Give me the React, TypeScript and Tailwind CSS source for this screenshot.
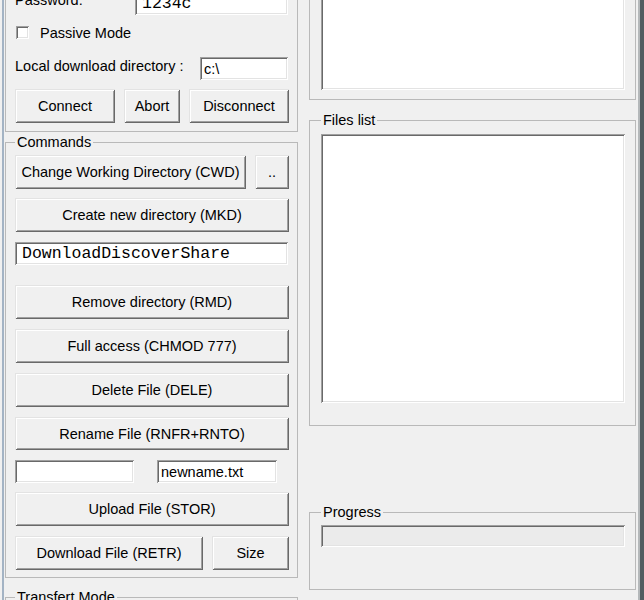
const raised =
  "shadow-[inset_1px_1px_#e3e3e3,inset_-1px_-1px_#696969,inset_2px_2px_#ffffff,inset_-2px_-2px_#a0a0a0]";
const sunken =
  "shadow-[inset_1px_1px_#a0a0a0,inset_-1px_-1px_#ffffff,inset_2px_2px_#696969,inset_-2px_-2px_#e3e3e3]";

function Btn({ label, className = "" }: { label: string; className?: string }) {
  return (
    <button className={`flex items-center justify-center bg-[#f0f0f0] text-black ${raised} ${className}`}>
      {label}
    </button>
  );
}

function TextBox({ value = "", mono = false, className = "" }: { value?: string; mono?: boolean; className?: string }) {
  return (
    <div
      className={`flex h-[23px] items-center overflow-hidden bg-white ${sunken} ${
        mono ? "pl-[7px] font-['Liberation_Mono',monospace] text-[16.5px]" : "pl-[4px]"
      } ${className}`}
    >
      {value}
    </div>
  );
}

function Group({ title, className = "", children }: { title: string; className?: string; children?: React.ReactNode }) {
  return (
    <fieldset className={`flex flex-col border border-[#b9b9b9] ${className}`}>
      <legend className="px-[2px] leading-[16px]">{title}</legend>
      {children}
    </fieldset>
  );
}

export default function App() {
  return (
    <div className="flex h-[600px] w-[644px] items-start overflow-hidden bg-[#f0f0f0] font-['Liberation_Sans',Arial,sans-serif] text-[14.5px] leading-[16px] text-black">
      {/* window edge */}
      <div className="flex h-full w-[5px] shrink-0">
        <div className="ml-[2px] h-full w-[2px] bg-[#a3b3c4]" />
      </div>

      {/* left column */}
      <div className="flex w-[293px] shrink-0 flex-col">
        <div className="-mt-[30px] flex h-[162px] flex-col border border-[#b9b9b9] pl-[9px] pr-[8px] pt-[21px]">
          <div className="flex h-[23px] items-start">
            <span>Password:</span>
            <TextBox value="1234c" mono className="ml-auto mr-[1px] w-[153px]" />
          </div>
          <div className="mt-[11px] flex h-[13px] items-center">
            <div className={`ml-[1px] h-[13px] w-[13px] bg-white ${sunken}`} />
            <span className="ml-[11px]">Passive Mode</span>
          </div>
          <div className="mt-[18px] flex h-[23px] items-start">
            <span className="mt-[1px]">Local download directory :</span>
            <TextBox value="c:\" className="ml-auto mr-[1px] w-[88px]" />
          </div>
          <div className="mt-[9px] flex h-[34px] gap-[9px]">
            <Btn label="Connect" className="w-[100px]" />
            <Btn label="Abort" className="w-[56px]" />
            <Btn label="Disconnect" className="w-[100px]" />
          </div>
        </div>

        <Group title="Commands" className="mt-[2px] h-[444px] pl-[9px] pr-[8px]">
          <div className="mt-[5px] flex h-[34px] gap-[9px]">
            <Btn label="Change Working Directory (CWD)" className="w-[231px]" />
            <Btn label=".." className="w-[34px]" />
          </div>
          <Btn label="Create new directory (MKD)" className="mt-[9px] h-[34px] w-full" />
          <TextBox value="DownloadDiscoverShare" mono className="mt-[10px] mr-[1px]" />
          <Btn label="Remove directory (RMD)" className="mt-[20px] h-[34px] w-full" />
          <Btn label="Full access (CHMOD 777)" className="mt-[10px] h-[34px] w-full" />
          <Btn label="Delete File (DELE)" className="mt-[10px] h-[34px] w-full" />
          <Btn label="Rename File (RNFR+RNTO)" className="mt-[10px] h-[33px] w-full" />
          <div className="mt-[10px] flex">
            <TextBox className="w-[119px]" />
            <TextBox value="newname.txt" className="ml-[23px] w-[120px]" />
          </div>
          <Btn label="Upload File (STOR)" className="mt-[9px] h-[34px] w-full" />
          <div className="mt-[10px] flex h-[34px] gap-[9px]">
            <Btn label="Download File (RETR)" className="w-[188px]" />
            <Btn label="Size" className="w-[77px]" />
          </div>
        </Group>

        <Group title="Transfert Mode" className="mt-[11px] h-[100px] pl-[9px] pr-[8px]" />
      </div>

      {/* right column */}
      <div className="ml-[11px] flex w-[327px] shrink-0 flex-col">
        <div className="-mt-[30px] flex h-[130px] flex-col border border-[#b9b9b9] pb-[9px] pl-[11px] pr-[10px] pt-[10px]">
          <div className={`flex-1 bg-white ${sunken}`} />
        </div>

        <Group title="Files list" className="mt-[12px] h-[314px] pl-[11px] pr-[10px]">
          <div className={`mt-[6px] h-[269px] bg-white ${sunken}`} />
        </Group>

        <Group title="Progress" className="mt-[78px] h-[86px] pl-[11px] pr-[10px]">
          <div className={`mt-[5px] h-[22px] bg-[#ebebeb] ${sunken}`} />
        </Group>
      </div>

      {/* right window edge */}
      <div className="flex h-full w-[8px] shrink-0">
        <div className="w-[2px]" />
        <div className="h-full w-[2px] bg-[#b4b8ba]" />
        <div className="h-full w-[4px] bg-[#525c60]" />
      </div>
    </div>
  );
}
